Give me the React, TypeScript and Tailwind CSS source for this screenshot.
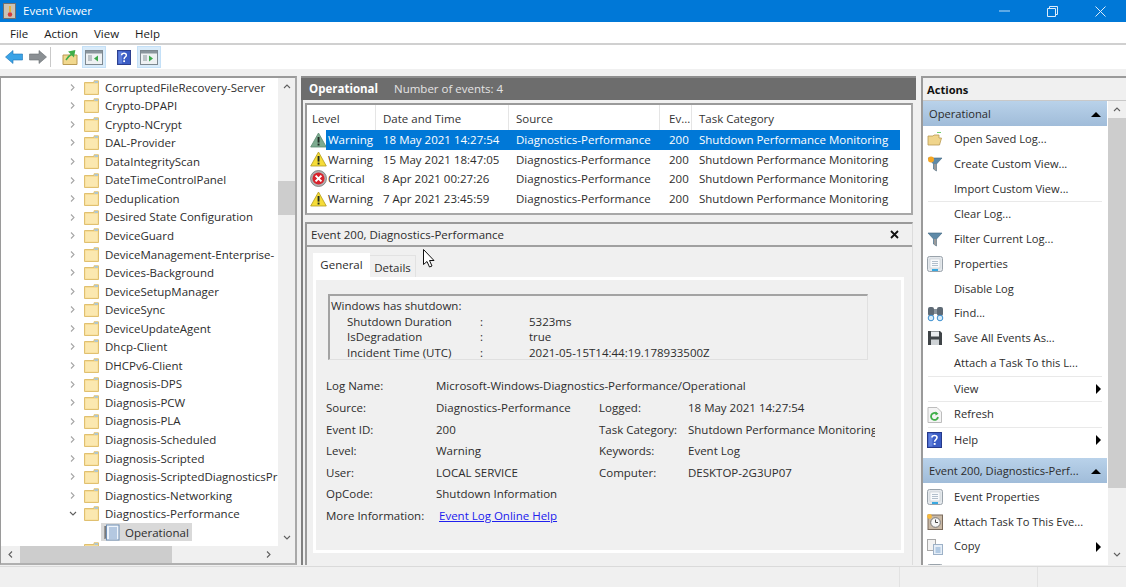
import React from "react";

function Folder() {
  return (
    <svg width="15" height="15" viewBox="0 0 15 15" className="shrink-0">
      <path d="M0.5 2.5 H10 V0.8 H14.5 V14.5 H0.5 Z" fill="#f7dc94" stroke="#e0c070" strokeWidth="1" />
      <rect x="10.5" y="1.2" width="3.5" height="1.6" fill="#9fc4e0" />
      <rect x="1.5" y="4" width="12" height="9.5" fill="#fbe8b0" />
    </svg>
  );
}

function LogIcon() {
  return (
    <svg width="16" height="17" viewBox="0 0 16 17" className="shrink-0">
      <rect x="2.5" y="1" width="12.5" height="15" fill="#eef4fb" stroke="#6f8fb5" />
      <path d="M1 2 V15 M2 3 H1 M2 5 H1 M2 7 H1 M2 9 H1 M2 11 H1 M2 13 H1" stroke="#5a5a5a" />
      <path d="M5 4 H13 M5 6 H13 M5 8 H13 M5 10 H13 M5 12 H13 M5 14 H13" stroke="#7a9cc6" />
    </svg>
  );
}

function Warning({ selected }: { selected?: boolean }) {
  return (
    <svg width="17" height="16" viewBox="0 0 17 16" className="shrink-0">
      <path d="M8.5 1 L16.3 15 H0.7 Z" fill={selected ? "#7dab90" : "#f5dc38"} stroke={selected ? "#5a8a70" : "#b49a1c"} strokeWidth="0.8" />
      <rect x="7.6" y="5" width="1.9" height="5.6" fill="#1f2a22" />
      <rect x="7.6" y="11.6" width="1.9" height="1.9" fill="#1f2a22" />
    </svg>
  );
}

function Critical() {
  return (
    <svg width="17" height="17" viewBox="0 0 17 17" className="shrink-0">
      <circle cx="8.5" cy="8.5" r="8" fill="#b0b0b0" stroke="#777" strokeWidth="0.8" />
      <circle cx="8.5" cy="8.5" r="6" fill="#d8232c" />
      <path d="M5.6 5.6 L11.4 11.4 M11.4 5.6 L5.6 11.4" stroke="#fff" strokeWidth="2" />
    </svg>
  );
}

function Chevron({ dir = "right", light }: { dir?: "right" | "down" | "left" | "up"; light?: boolean }) {
  const d = { right: "M2 1.5 L5 4.5 L2 7.5", left: "M5 1.5 L2 4.5 L5 7.5", down: "M1 3 L4 6 L7 3", up: "M1 6 L4 3 L7 6" }[dir];
  return (
    <svg width="8" height="9" viewBox="0 0 8 9" className="shrink-0">
      <path d={d} fill="none" stroke={light ? "#a6a6a6" : "#606060"} strokeWidth="1.1" />
    </svg>
  );
}

const TREE = [
  "CorruptedFileRecovery-Server", "Crypto-DPAPI", "Crypto-NCrypt", "DAL-Provider", "DataIntegrityScan",
  "DateTimeControlPanel", "Deduplication", "Desired State Configuration", "DeviceGuard",
  "DeviceManagement-Enterprise-", "Devices-Background", "DeviceSetupManager", "DeviceSync", "DeviceUpdateAgent",
  "Dhcp-Client", "DHCPv6-Client", "Diagnosis-DPS", "Diagnosis-PCW", "Diagnosis-PLA", "Diagnosis-Scheduled",
  "Diagnosis-Scripted", "Diagnosis-ScriptedDiagnosticsPr", "Diagnostics-Networking", "Diagnostics-Performance",
];

function TreePane() {
  return (
    <div className="w-[297px] shrink-0 flex flex-col border-2 border-l border-[#9a9a9a] border-r-[#a8a8a8] border-b-[#b0b0b0] bg-white">
      <div className="flex-1 min-h-0 flex">
        <div className="flex-1 min-w-0 overflow-hidden">
          {TREE.map((t, i) => (
            <div key={t} className="h-[18.56px] flex items-center pl-[68px] whitespace-nowrap overflow-hidden">
              <span className="w-[15px] shrink-0 flex justify-start">
                <Chevron dir={i === TREE.length - 1 ? "down" : "right"} light={i !== TREE.length - 1} />
              </span>
              <Folder />
              <span className="ml-[6px]">{t}</span>
            </div>
          ))}
          <div className="h-[18.56px] flex items-center pl-[100px]">
            <div className="h-[18px] flex items-center bg-[#d9d9d9] pl-[3px] pr-[3px]">
              <LogIcon />
              <span className="ml-[5px]">Operational</span>
            </div>
          </div>
          <div className="pl-[83px] h-[5px] overflow-hidden"><Folder /></div>
        </div>
        <div className="w-[17px] shrink-0 bg-[#f0f0f0] flex flex-col items-center">
          <div className="h-[17px] flex items-center justify-center"><Chevron dir="up" /></div>
          <div className="h-[86px]" />
          <div className="w-full h-[34px] bg-[#cdcdcd]" />
          <div className="flex-1" />
          <div className="h-[17px] flex items-center justify-center"><Chevron dir="down" /></div>
        </div>
      </div>
      <div className="h-[17px] shrink-0 bg-[#f0f0f0] flex items-center">
        <div className="w-[19px] flex justify-center"><Chevron dir="left" /></div>
        <div className="w-[152px] h-full bg-[#cdcdcd]" />
        <div className="flex-1" />
        <div className="w-[19px] flex justify-center mr-[17px]"><Chevron dir="right" /></div>
      </div>
    </div>
  );
}

const EVENTS = [
  { l: "Warning", d: "18 May 2021 14:27:54", k: "s" },
  { l: "Warning", d: "15 May 2021 18:47:05", k: "w" },
  { l: "Critical", d: "8 Apr 2021 00:27:26", k: "c" },
  { l: "Warning", d: "7 Apr 2021 23:45:59", k: "w" },
];

function EventList() {
  return (
    <div className="h-[112px] shrink-0 bg-white border-2 border-[#9a9a9a] border-b-[#a8a8a8] border-r-[#a8a8a8] overflow-hidden">
      <div className="h-[25px] flex items-center text-[#333]">
        <div className="w-[69px] shrink-0 h-full flex items-center pl-[5px] pt-[2px] border-r border-[#e5e5e5]">Level</div>
        <div className="w-[133px] shrink-0 h-full flex items-center pl-[7px] pt-[2px] border-r border-[#e5e5e5]">Date and Time</div>
        <div className="w-[151px] shrink-0 h-full flex items-center pl-[7px] pt-[2px] border-r border-[#e5e5e5]">Source</div>
        <div className="w-[32px] shrink-0 h-full flex items-center pl-[9px] pt-[2px] border-r border-[#e5e5e5]">Ev...</div>
        <div className="pl-[7px] pt-[2px]">Task Category</div>
      </div>
      {EVENTS.map((e, i) => (
        <div key={i} className="h-[19.6px] flex items-center pl-[3px]">
          <span className="w-[16px] shrink-0 flex justify-center">
            {e.k === "s" ? <Warning selected /> : e.k === "w" ? <Warning /> : <Critical />}
          </span>
          <div className={`flex items-center h-full w-[574px] shrink-0 ${e.k === "s" ? "bg-[#0078d7] text-white" : ""}`}>
            <span className="w-[50px] pl-[2px] shrink-0">{e.l}</span>
            <span className="w-[133px] pl-[7px] shrink-0">{e.d}</span>
            <span className="w-[153px] pl-[7px] shrink-0">Diagnostics-Performance</span>
            <span className="w-[30px] pl-[7px] shrink-0">200</span>
            <span className="pl-[7px] whitespace-nowrap">Shutdown Performance Monitoring</span>
          </div>
        </div>
      ))}
    </div>
  );
}

const LEFT_ROWS: [string, string, string?, string?][] = [
  ["Source:", "Diagnostics-Performance", "Logged:", "18 May 2021 14:27:54"],
  ["Event ID:", "200", "Task Category:", "Shutdown Performance Monitoring"],
  ["Level:", "Warning", "Keywords:", "Event Log"],
  ["User:", "LOCAL SERVICE", "Computer:", "DESKTOP-2G3UP07"],
  ["OpCode:", "Shutdown Information"],
];

function Detail() {
  return (
    <div className="flex-1 min-h-0 flex flex-col border-t-2 border-l-2 border-[#9a9a9a] border-r border-r-[#dcdcdc] bg-[#f0f0f0] overflow-hidden relative">
      <div className="h-[23px] shrink-0 flex items-center justify-between pl-[4px] pr-[13px] border-b-2 border-[#a0a0a0]">
        <span>Event 200, Diagnostics-Performance</span>
        <svg width="9" height="9" viewBox="0 0 9 9"><path d="M1 1 L8 8 M8 1 L1 8" stroke="#111" strokeWidth="1.8" /></svg>
      </div>
      <div className="flex-1 min-h-0 flex flex-col pl-[6px] pr-[8px] pt-[6px] pb-[12px]">
        <div className="flex items-end h-[24px] shrink-0">
          <div className="w-[57px] h-[24px] bg-white flex items-center justify-center">General</div>
          <div className="w-[46px] h-[22px] flex items-center justify-center border-t border-r border-[#e2e2e2] pt-[2px]">Details</div>
        </div>
        <div className="flex-1 min-h-0 border-[3px] border-white pt-[14px] pl-[12px] overflow-hidden">
          <div className="w-[540px] h-[66px] border-t-2 border-l-2 border-[#a3a3a3] border-b border-r border-b-[#e0e0e0] border-r-[#e0e0e0] pl-[1px] leading-[15.7px] pt-[2px] overflow-hidden">
            <div>Windows has shutdown:</div>
            <div className="flex pl-[16px]"><span className="w-[133px]">Shutdown Duration</span><span className="w-[49px]">:</span><span>5323ms</span></div>
            <div className="flex pl-[16px]"><span className="w-[133px]">IsDegradation</span><span className="w-[49px]">:</span><span>true</span></div>
            <div className="flex pl-[16px]"><span className="w-[133px]">Incident Time (UTC)</span><span className="w-[49px]">:</span><span>2021-05-15T14:44:19.178933500Z</span></div>
          </div>
          <div className="ml-[-2px] mt-[15px]">
            <div className="flex h-[22px] items-center"><span className="w-[110px]">Log Name:</span><span>Microsoft-Windows-Diagnostics-Performance/Operational</span></div>
            {LEFT_ROWS.map((r) => (
              <div key={r[0]} className="flex h-[21.5px] items-center whitespace-nowrap">
                <span className="w-[110px] shrink-0">{r[0]}</span>
                <span className="w-[163px] shrink-0">{r[1]}</span>
                {r[2] && <span className="w-[89px] shrink-0">{r[2]}</span>}
                {r[3] && <span className="w-[187px] overflow-hidden">{r[3]}</span>}
              </div>
            ))}
            <div className="flex h-[21.5px] items-center">
              <span className="w-[113px] shrink-0">More Information:</span>
              <span className="text-[#2020ee] underline">Event Log Online Help</span>
            </div>
          </div>
        </div>
      </div>
    </div>
  );
}

function OpenIcon() {
  return (
    <svg width="16" height="14" viewBox="0 0 16 14">
      <path d="M1 4 H6 L7 3 H12 V6 H14.5 L12.5 13 H1 Z" fill="#f0d58c" stroke="#b99a53" strokeWidth="0.8" />
      <path d="M10 0.5 H14" stroke="#6fcf6f" />
    </svg>
  );
}
function Funnel({ star }: { star?: boolean }) {
  return (
    <svg width="16" height="16" viewBox="0 0 16 16">
      <path d="M1 2 H15 L9.5 8 V15 L6.5 13 V8 Z" fill="#5f8aa8" stroke="#3f6580" strokeWidth="0.6" />
      <path d="M7 8 H9.5 V15 L7 13.5 Z" fill="#9a9a9a" />
      {star && <circle cx="4" cy="3.5" r="3" fill="#f5a623" />}
    </svg>
  );
}
function PropsIcon() {
  return (
    <svg width="16" height="16" viewBox="0 0 16 16">
      <rect x="0.5" y="0.5" width="15" height="15" rx="2" fill="#e4e8ec" stroke="#9aa3ab" />
      <rect x="3" y="3" width="10" height="9" fill="#f8fafc" stroke="#c1c8ce" strokeWidth="0.6" />
      <path d="M5 5.5 H11 M5 7.5 H11 M5 9.5 H11" stroke="#9fb0bf" strokeWidth="0.8" />
      <rect x="5" y="13" width="6" height="2" fill="#38a8e0" />
    </svg>
  );
}
function FindIcon() {
  return (
    <svg width="17" height="17" viewBox="0 0 17 17">
      <rect x="1" y="2" width="6" height="9" rx="2" fill="#5e6a75" />
      <rect x="10" y="2" width="6" height="9" rx="2" fill="#5e6a75" />
      <rect x="7" y="4" width="3" height="5" fill="#8a949c" />
      <circle cx="4" cy="13" r="2.8" fill="#d6ecfa" stroke="#3b8fd0" />
      <circle cx="13" cy="13" r="2.8" fill="#d6ecfa" stroke="#3b8fd0" />
    </svg>
  );
}
function SaveIcon() {
  return (
    <svg width="16" height="16" viewBox="0 0 16 16">
      <path d="M1 1 H13 L15 3 V15 H1 Z" fill="#3f4447" />
      <rect x="4" y="1.5" width="8" height="5" fill="#e9ecee" />
      <rect x="4" y="9.5" width="8" height="5.5" fill="#cfd3d6" />
    </svg>
  );
}
function RefreshIcon() {
  return (
    <svg width="15" height="16" viewBox="0 0 15 16">
      <path d="M1 0.5 H10 L14.5 5 V15.5 H1 Z" fill="#f4f4f4" stroke="#bdbdbd" />
      <path d="M11 10 A3.5 3.5 0 1 1 9.5 6.5" fill="none" stroke="#3fae49" strokeWidth="1.8" />
      <path d="M8.5 4.5 L11.5 6.7 L8.5 8.5 Z" fill="#3fae49" />
    </svg>
  );
}
function HelpIcon({ size = 15 }: { size?: number }) {
  return (
    <svg width={size} height={size + 1} viewBox="0 0 15 16">
      <rect x="0.5" y="0.5" width="14" height="15" fill="#3b5cc4" stroke="#26398a" />
      <rect x="1.5" y="1.5" width="4" height="13" fill="#5f7fdc" />
      <path d="M5 5.5 C5 2.8 10 2.8 10 5.5 C10 7.5 7.6 7.6 7.6 9.8" fill="none" stroke="#fff" strokeWidth="1.6" />
      <rect x="6.7" y="11" width="1.9" height="1.9" fill="#fff" />
    </svg>
  );
}
function TaskIcon() {
  return (
    <svg width="16" height="16" viewBox="0 0 16 16">
      <rect x="1" y="1" width="14.5" height="14.5" fill="#c9b9a6" stroke="#7a6b5c" />
      <circle cx="8.5" cy="8.5" r="4.8" fill="#f6f6f6" stroke="#777" />
      <path d="M8.5 5.5 V8.5 H11" fill="none" stroke="#444" />
      <circle cx="2.5" cy="2.5" r="2.4" fill="#f7b93c" />
    </svg>
  );
}
function CopyIcon() {
  return (
    <svg width="16" height="16" viewBox="0 0 16 16">
      <rect x="0.5" y="0.5" width="8" height="11" fill="#f2f2f2" stroke="#a8a8a8" />
      <rect x="6.5" y="5.5" width="9" height="10" fill="#e6eef7" stroke="#9db1c7" />
      <path d="M8.5 9 H13.5 M8.5 11 H13.5 M8.5 13 H13.5" stroke="#7fa6cf" />
    </svg>
  );
}

type Act = { t: string; i?: React.ReactNode; arrow?: boolean } | "sep";

const ACTIONS1: Act[] = [
  { t: "Open Saved Log...", i: <OpenIcon /> },
  { t: "Create Custom View...", i: <Funnel star /> },
  { t: "Import Custom View..." },
  "sep",
  { t: "Clear Log..." },
  { t: "Filter Current Log...", i: <Funnel /> },
  { t: "Properties", i: <PropsIcon /> },
  { t: "Disable Log" },
  { t: "Find...", i: <FindIcon /> },
  { t: "Save All Events As...", i: <SaveIcon /> },
  { t: "Attach a Task To this L..." },
  "sep",
  { t: "View", arrow: true },
  "sep",
  { t: "Refresh", i: <RefreshIcon /> },
  "sep",
  { t: "Help", i: <HelpIcon />, arrow: true },
];
const ACTIONS2: Act[] = [
  { t: "Event Properties", i: <PropsIcon /> },
  { t: "Attach Task To This Eve...", i: <TaskIcon /> },
  { t: "Copy", i: <CopyIcon />, arrow: true },
  { t: "", i: <PropsIcon /> },
];

function ActionList({ items }: { items: Act[] }) {
  return (
    <>
      {items.map((a, i) =>
        a === "sep" ? (
          <div key={i} className="h-[1px] shrink-0 mx-[5px] bg-[#e9e9e9]" />
        ) : (
          <div key={i} className="h-[24.75px] flex items-center shrink-0">
            <span className="w-[31px] pl-[4px] shrink-0 flex items-center">{a.i}</span>
            <span className="flex-1 whitespace-nowrap">{a.t}</span>
            {a.arrow && <span className="mr-[6px] w-0 h-0 border-y-[5px] border-y-transparent border-l-[5px] border-l-black" />}
          </div>
        ),
      )}
    </>
  );
}

function SectionHead({ t }: { t: string }) {
  return (
    <div className="h-[25px] shrink-0 flex items-center justify-between pl-[6px] pr-[6px] pt-[1px] bg-gradient-to-b from-[#b9d2ea] to-[#a0bcd9] text-[#2b2b2b]">
      <span className="whitespace-nowrap">{t}</span>
      <span className="w-0 h-0 border-x-[5px] border-x-transparent border-b-[5px] border-b-black" />
    </div>
  );
}

function ActionsPane() {
  return (
    <div className="w-[205px] shrink-0 flex flex-col border-l-2 border-t-2 border-[#9a9a9a] bg-white overflow-hidden text-[11.15px]">
      <div className="h-[23px] shrink-0 flex items-center pl-[4px] pt-[2px] bg-[#f0f0f0] border-b border-[#c8c8c8] font-bold text-[#111]">Actions</div>
      <div className="flex-1 min-h-0 flex">
        <div className="w-[184px] shrink-0 flex flex-col overflow-hidden">
          <SectionHead t="Operational" />
          <div className="h-[1px] shrink-0" />
          <ActionList items={ACTIONS1} />
          <div className="h-[5.6px] shrink-0" />
          <SectionHead t="Event 200, Diagnostics-Perf..." />
          <div className="h-[1.6px] shrink-0" />
          <ActionList items={ACTIONS2} />
        </div>
        <div className="flex-1 ml-[1px] bg-[#f0f0f0] flex flex-col items-center">
          <div className="h-[17px] shrink-0 flex items-center justify-center"><Chevron dir="up" /></div>
          <div className="w-full h-[370px] shrink-0 bg-[#cdcdcd]" />
          <div className="flex-1" />
          <div className="h-[17px] shrink-0 flex items-center justify-center mb-[2px]"><Chevron dir="down" /></div>
        </div>
      </div>
    </div>
  );
}

function PaneIcon({ right }: { right?: boolean }) {
  return (
    <div className="w-[24px] h-[22px] bg-[#d9ebf9] border border-[#c4e0f7] flex items-center justify-center">
      <svg width="18" height="15" viewBox="0 0 18 15">
        <rect x="0.5" y="0.5" width="17" height="14" fill="#eef1f3" stroke="#7d8890" />
        <rect x="1" y="1" width="16" height="2.5" fill="#8a959c" />
        <path d="M3 6 H7 M3 8 H7 M3 10 H7" stroke="#8a959c" />
        <path d={right ? "M9 5.5 L13 8.5 L9 11.5 Z" : "M13 5.5 L9 8.5 L13 11.5 Z"} fill="#3aa84a" />
      </svg>
    </div>
  );
}

function Toolbar() {
  return (
    <div className="h-[24px] shrink-0 flex items-center bg-white pl-[5px]">
      <svg width="18" height="14" viewBox="0 0 18 14"><path d="M0.5 7 L8 0.5 V4 H17.5 V10 H8 V13.5 Z" fill="#3aa3e6" stroke="#1c74b5" strokeWidth="0.6" /></svg>
      <svg width="18" height="14" viewBox="0 0 18 14" className="ml-[6px]"><path d="M17.5 7 L10 0.5 V4 H0.5 V10 H10 V13.5 Z" fill="#8a8f93" stroke="#6a6f73" strokeWidth="0.6" /></svg>
      <div className="w-[1px] h-[20px] bg-[#c9c9c9] ml-[3px]" />
      <svg width="16" height="16" viewBox="0 0 16 16" className="ml-[11px]">
        <path d="M1 6 H15 V15.5 H1 Z" fill="#f1d88e" stroke="#b99a53" />
        <path d="M4 11 C6 8 8 6 10 5 M7.5 3 L12.5 2 L11.5 7 Z" fill="#3fae49" stroke="#3fae49" strokeWidth="1.4" />
      </svg>
      <div className="ml-[4px]"><PaneIcon /></div>
      <div className="ml-[11px] w-[14px] flex justify-center"><HelpIcon size={14} /></div>
      <div className="ml-[6px]"><PaneIcon right /></div>
    </div>
  );
}

export default function App() {
  return (
    <div className="relative w-[1126px] h-[587px] overflow-hidden flex flex-col bg-[#f0f0f0] text-[11.5px] text-[#2d2d2d] font-['Open_Sans','Noto_Sans',sans-serif]">
      <div className="h-[22px] shrink-0 bg-[#0078d7] flex items-center text-white">
        <svg width="14" height="16" viewBox="0 0 14 16" className="ml-[3px]">
          <rect x="0.5" y="0.5" width="12" height="15" fill="#c9c2b4" stroke="#6f6f6f" />
          <path d="M7 3 V9" stroke="#e3b23c" strokeWidth="2" />
          <circle cx="7" cy="11.5" r="2.2" fill="#d23c3c" />
        </svg>
        <span className="ml-[6px]">Event Viewer</span>
        <div className="flex-1" />
        <svg width="11" height="2" viewBox="0 0 11 2" className="mr-[37px]"><path d="M0 1 H11" stroke="#bcdcf5" /></svg>
        <svg width="11" height="11" viewBox="0 0 11 11" className="mr-[37px]"><path d="M0.5 2.5 H8.5 V10.5 H0.5 Z M2.5 2.5 V0.5 H10.5 V8.5 H8.5" fill="none" stroke="#dcecfa" /></svg>
        <svg width="11" height="11" viewBox="0 0 11 11" className="mr-[20px]"><path d="M0.5 0.5 L10.5 10.5 M10.5 0.5 L0.5 10.5" stroke="#dcecfa" /></svg>
      </div>
      <div className="h-[23px] shrink-0 bg-white flex items-center gap-[16px] pl-[10px] pt-[2px] border-b-2 border-[#d0d0d0] text-[#1a1a1a]">
        <span>File</span><span>Action</span><span>View</span><span>Help</span>
      </div>
      <Toolbar />
      <div className="flex-1 min-h-0 pt-[7px] flex pb-[1px] border-b border-[#dadada]">
        <TreePane />
        <div className="w-[615px] shrink-0 flex flex-col ml-[4px]">
          <div className="h-[24px] shrink-0 bg-[#6d6d6d] text-white flex items-center pl-[8px] border-t-2 border-[#8e8e8e]">
            <span className="font-bold w-[85px]">Operational</span>
            <span className="text-[#e4e4e4]">Number of events: 4</span>
          </div>
          <div className="flex-1 min-h-0 flex flex-col border-l-2 border-[#808080] pl-[2px] pr-[3px] pt-[3px]">
            <EventList />
            <div className="h-[7px] shrink-0" />
            <Detail />
          </div>
        </div>
        <div className="w-[5px] shrink-0" />
        <ActionsPane />
      </div>
      <div className="h-[20px] shrink-0 bg-[#f0f0f0] flex">
        <div className="w-[899px]" />
        <div className="w-[1px] bg-[#e2e2e2]" />
        <div className="w-[137px]" />
        <div className="w-[1px] bg-[#e2e2e2]" />
      </div>
      <svg width="12" height="19" viewBox="0 0 12 19" className="absolute left-[423px] top-[249px]">
        <path d="M0.5 0.5 V15.5 L4 12.5 L6.5 18 L9 17 L6.5 11.5 H11 Z" fill="#fff" stroke="#111" strokeWidth="1" />
      </svg>
    </div>
  );
}
